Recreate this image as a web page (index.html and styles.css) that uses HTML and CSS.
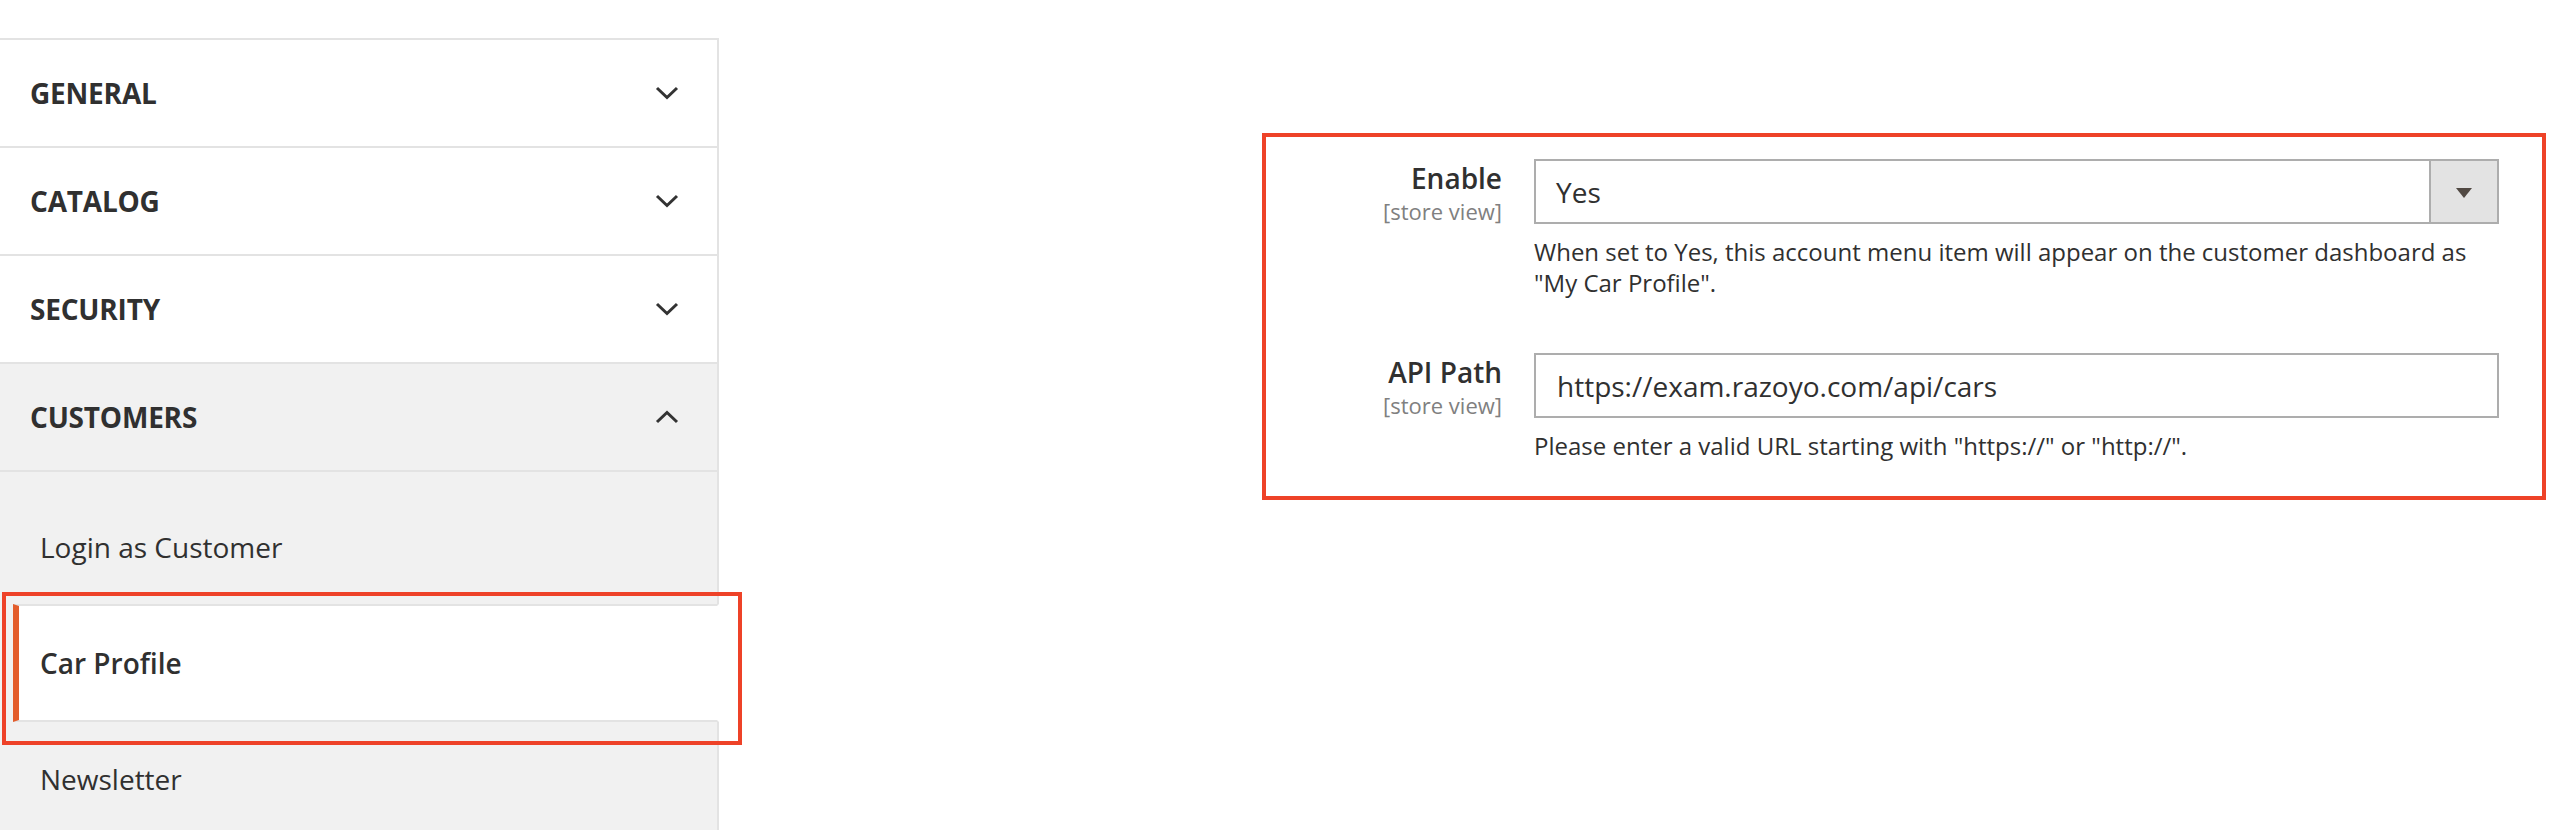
FILE: index.html
```html
<!DOCTYPE html>
<html lang="en">
<head>
<meta charset="utf-8">
<title>Configuration - Customers - Car Profile</title>
<link rel="stylesheet" href="styles.css">
</head>
<body>
<div class="page">
  <nav class="sidebar">
    <div class="nav-title">
      <strong>GENERAL</strong>
      <svg class="chev" width="24" height="14" viewBox="0 0 24 14"><polyline points="2,2 12,11.5 22,2"/></svg>
    </div>
    <div class="nav-title">
      <strong>CATALOG</strong>
      <svg class="chev" width="24" height="14" viewBox="0 0 24 14"><polyline points="2,2 12,11.5 22,2"/></svg>
    </div>
    <div class="nav-title">
      <strong>SECURITY</strong>
      <svg class="chev" width="24" height="14" viewBox="0 0 24 14"><polyline points="2,2 12,11.5 22,2"/></svg>
    </div>
    <div class="nav-title open">
      <strong>CUSTOMERS</strong>
      <svg class="chev" width="24" height="14" viewBox="0 0 24 14"><polyline points="2,12 12,2.5 22,12"/></svg>
    </div>
    <ul class="nav-items">
      <li class="nav-item">Login as Customer</li>
      <li class="nav-item active">Car Profile<span class="mark mark-nav"></span></li>
      <li class="nav-item">Newsletter</li>
    </ul>
  </nav>

  <main class="main">
    <section class="fieldset">
      <div class="field">
        <div class="label">
          <span class="label-text">Enable</span>
          <span class="scope">[store view]</span>
        </div>
        <div class="control">
          <div class="select">
            <span class="select-value">Yes</span>
            <span class="select-btn"><span class="tri"></span></span>
          </div>
          <p class="note">When set to Yes, this account menu item will appear on the customer dashboard as "My Car Profile".</p>
        </div>
      </div>
      <div class="field">
        <div class="label">
          <span class="label-text">API Path</span>
          <span class="scope">[store view]</span>
        </div>
        <div class="control">
          <div class="input">https://exam.razoyo.com/api/cars</div>
          <p class="note">Please enter a valid URL starting with "https://" or "http://".</p>
        </div>
      </div>
    </section>
  </main>
</div>
</body>
</html>
```

FILE: styles.css
```css
html, body {
  margin: 0;
  padding: 0;
  background: #ffffff;
  overflow: hidden;
  height: 830px;
}

body {
  font-family: "Open Sans", "Noto Sans", "Liberation Sans", sans-serif;
  color: #303030;
}

.page {
  display: flex;
  align-items: flex-start;
  padding-top: 38px;
}

/* ---------- Sidebar ---------- */
.sidebar {
  width: 719px;
  flex: 0 0 719px;
  border-top: 2px solid #e3e3e3;
}

.nav-title {
  height: 106px;
  display: flex;
  align-items: center;
  justify-content: space-between;
  padding: 0 40px 0 30px;
  border-bottom: 2px solid #e3e3e3;
  border-right: 2px solid #e3e3e3;
  background: #ffffff;
}

.nav-title strong {
  font-size: 28px;
  font-weight: 700;
  color: #303030;
  letter-spacing: -0.2px;
}

.nav-title.open {
  background: #f1f1f1;
}

.chev {
  display: block;
  margin-right: -2px;
}

.chev polyline {
  fill: none;
  stroke: #333333;
  stroke-width: 3;
  stroke-linecap: butt;
  stroke-linejoin: miter;
}

.nav-items {
  list-style: none;
  margin: 0;
  padding: 0;
  background: #f1f1f1;
}

.nav-items::before {
  content: "";
  display: block;
  height: 18px;
  border-right: 2px solid #e3e3e3;
}

.nav-item {
  height: 114px;
  display: flex;
  align-items: center;
  padding-left: 40px;
  font-size: 28px;
  color: #303030;
  border-right: 2px solid #e3e3e3;
}

.nav-item.active {
  position: relative;
  height: 114px;
  margin-left: 13px;
  padding-left: 21px;
  background: #ffffff;
  font-weight: 600;
  border-left: 6px solid #e35d2c;
  border-top: 2px solid #e3e3e3;
  border-bottom: 2px solid #e3e3e3;
  border-right: 2px solid #ffffff;
}

/* red annotation boxes */
.mark {
  border: 4px solid #ee4228;
  box-sizing: border-box;
}

.mark-nav {
  position: absolute;
  left: -17px;
  top: -14px;
  width: 740px;
  height: 153px;
  pointer-events: none;
}

/* ---------- Main ---------- */
.main {
  flex: 1 1 auto;
  padding: 95px 0 0 543px;
}

.fieldset {
  width: 1284px;
  box-sizing: border-box;
  border: 4px solid #ee4228;
  padding: 22px 0 35px 0;
  display: flex;
  flex-direction: column;
  gap: 55px;
}

.field {
  display: grid;
  grid-template-columns: 236px 965px;
  column-gap: 32px;
}

.label {
  display: flex;
  flex-direction: column;
  align-items: flex-end;
  text-align: right;
  padding-top: 1px;
}

.label-text {
  font-size: 28px;
  font-weight: 600;
  line-height: 36px;
  color: #303030;
}

.scope {
  font-size: 22px;
  line-height: 30px;
  color: #808080;
}

.control {
  display: flex;
  flex-direction: column;
}

.select,
.input {
  height: 65px;
  box-sizing: border-box;
  border: 2px solid #adadad;
  background: #ffffff;
  font-size: 28px;
  color: #303030;
  display: flex;
  align-items: center;
}

.select-value {
  flex: 1 1 auto;
  padding-left: 20px;
}

.select-btn {
  width: 66px;
  align-self: stretch;
  border-left: 2px solid #adadad;
  background: #e3e3e3;
  display: flex;
  align-items: center;
  justify-content: center;
}

.tri {
  width: 0;
  height: 0;
  border-left: 8px solid transparent;
  border-right: 8px solid transparent;
  border-top: 10px solid #514943;
  margin-top: 2px;
}

.input {
  padding-left: 21px;
}

.note {
  margin: 12px 0 0 0;
  font-size: 24px;
  line-height: 31px;
  color: #303030;
}
```
